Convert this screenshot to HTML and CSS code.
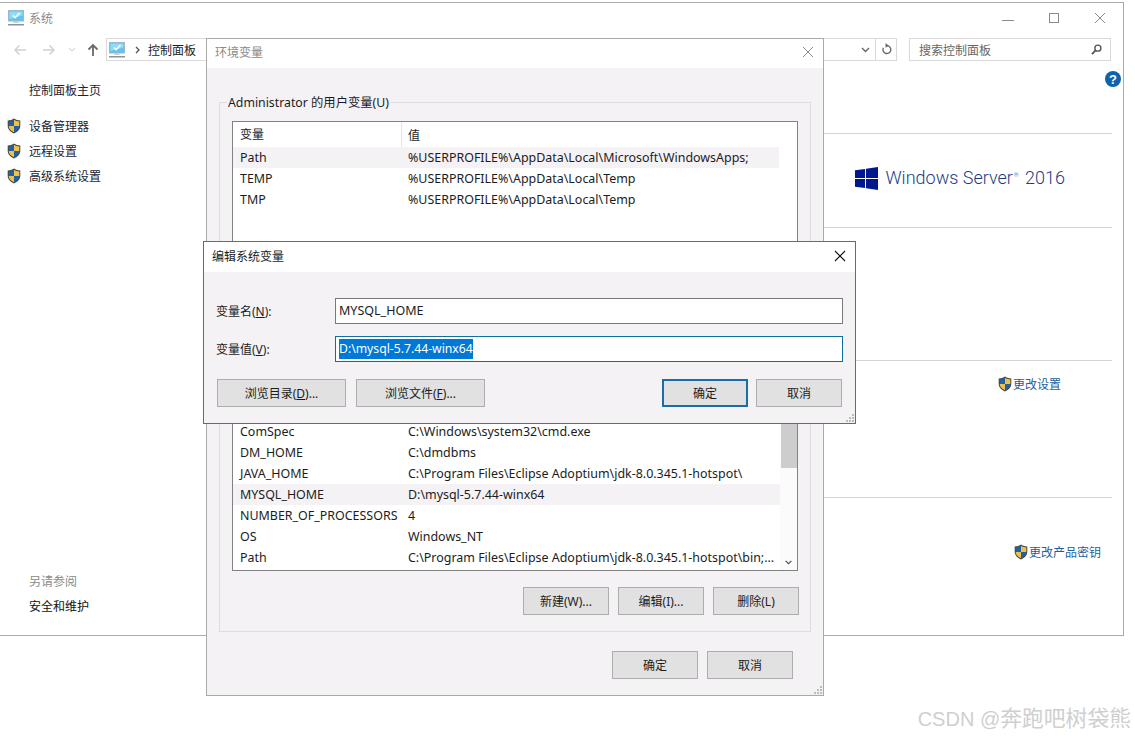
FILE: index.html
```html
<!DOCTYPE html>
<html lang="zh">
<head>
<meta charset="utf-8">
<title>系统</title>
<link rel="stylesheet" href="styles.css">
</head>
<body>
<svg class="defs" width="0" height="0" aria-hidden="true">
  <defs>
    <symbol id="shield" viewBox="0 0 14 16">
      <path d="M7 .6C5.2 1.9 3 2.5.7 2.6v5.2c0 3.4 2.5 6 6.3 7.6 3.8-1.6 6.3-4.2 6.3-7.6V2.6C11 2.5 8.800 1.900 7 .6z" fill="#4a4a3a"/>
      <path d="M7 1.700C5.500 2.700 3.600 3.300 1.700 3.400V8H7z" fill="#1f62a8"/>
      <path d="M7 1.700c1.500 1 3.400 1.600 5.300 1.700V8H7z" fill="#f0c04a"/>
      <path d="M1.700 8c.1 2.800 2.200 4.900 5.300 6.300V8z" fill="#f0c04a"/>
      <path d="M12.300 8c-.1 2.800-2.200 4.900-5.300 6.300V8z" fill="#1f62a8"/>
    </symbol>
    <symbol id="computer" viewBox="0 0 16 16">
      <rect x="0.500" y="0.500" width="15" height="10.500" fill="#5fc4f2" stroke="#9fb8c8"/>
      <path d="M1.500 1.500h13v4L1.500 9z" fill="#8edcf8"/>
      <path d="M5 5.500l2.200 2.200L11.500 3" fill="none" stroke="#fff" stroke-width="1.600"/>
      <rect x="5.500" y="11" width="5" height="2" fill="#c8ced2"/>
      <rect x="0" y="14" width="16" height="1.500" fill="#8a949c"/>
    </symbol>
    <symbol id="grip" viewBox="0 0 8 8">
      <path d="M6 0h2v2H6zM3 3h2v2H3zM6 3h2v2H6zM0 6h2v2H0zM3 6h2v2H3zM6 6h2v2H6z" fill="#bdbdbd"/>
    </symbol>
  </defs>
</svg>

<section class="main-window">
  <header class="main-title">
    <svg class="icon-16"><use href="#computer"/></svg>
    <span class="main-title-text">系统</span>
    <div class="win-controls">
      <svg class="win-btn" viewBox="0 0 12 12"><path d="M0 8.500h12" stroke="#8a8a8a"/></svg>
      <svg class="win-btn" viewBox="0 0 12 12"><rect x="1.500" y="1.500" width="9" height="9" fill="none" stroke="#8a8a8a"/></svg>
      <svg class="win-btn" viewBox="0 0 12 12"><path d="M1 1l10 10M11 1L1 11" stroke="#8a8a8a"/></svg>
    </div>
  </header>
  <nav class="main-nav">
    <svg class="nav-arrow" viewBox="0 0 14 12"><path d="M13 6H2M6.500 1.500L2 6l4.500 4.500" fill="none" stroke="#d2d2d2" stroke-width="1.500"/></svg>
    <svg class="nav-arrow" viewBox="0 0 14 12"><path d="M1 6h11M7.500 1.500L12 6l-4.500 4.500" fill="none" stroke="#d2d2d2" stroke-width="1.500"/></svg>
    <svg class="nav-drop" viewBox="0 0 8 5"><path d="M1 1l3 3 3-3" fill="none" stroke="#dcdcdc" stroke-width="1.200"/></svg>
    <svg class="nav-up" viewBox="0 0 12 14"><path d="M6 13V2M1.500 6.500L6 2l4.500 4.500" fill="none" stroke="#6a6a6a" stroke-width="1.800"/></svg>
    <div class="address">
      <svg class="icon-16 address-icon"><use href="#computer"/></svg>
      <svg class="address-chev" viewBox="0 0 5 8"><path d="M1 1l3 3-3 3" fill="none" stroke="#555" stroke-width="1.300"/></svg>
      <span class="address-text">控制面板</span>
      <svg class="address-drop" viewBox="0 0 9 6"><path d="M1 1l3.500 3.500L8 1" fill="none" stroke="#666" stroke-width="1.400"/></svg>
      <div class="address-refresh">
        <svg class="refresh-icon" viewBox="0 0 12 14"><path d="M6.500 2.800a4.300 4.300 0 1 1-3.900 2.300" fill="none" stroke="#666" stroke-width="1.500"/><path d="M5 0l3.500 2.800L5 5z" fill="#666"/></svg>
      </div>
    </div>
    <div class="search">
      <span>搜索控制面板</span>
      <svg class="search-icon" viewBox="0 0 12 12"><circle cx="7.500" cy="4.500" r="3.300" fill="none" stroke="#555" stroke-width="1.500"/><path d="M5 7l-4 4" stroke="#555" stroke-width="2"/></svg>
    </div>
  </nav>
  <div class="main-help-row">
    <svg class="help" viewBox="0 0 16 16"><circle cx="8" cy="8" r="8" fill="#0f63ae"/><text x="8" y="12.500" text-anchor="middle" class="help-q">?</text></svg>
  </div>
  <div class="main-body">
    <aside class="sidebar">
      <a class="side-home">控制面板主页</a>
      <ul class="side-links">
        <li><svg class="shield"><use href="#shield"/></svg>设备管理器</li>
        <li><svg class="shield"><use href="#shield"/></svg>远程设置</li>
        <li><svg class="shield"><use href="#shield"/></svg>高级系统设置</li>
      </ul>
      <div class="side-foot">
        <div class="side-foot-title">另请参阅</div>
        <div class="side-foot-link">安全和维护</div>
      </div>
    </aside>
    <div class="content">
      <div class="sec sec-a"></div>
      <div class="sec sec-b">
        <svg class="win-logo" viewBox="0 0 24 24"><path d="M0 3.500l10.500-1.500v9.500H0zM11.500 1.900L24 0v11.500H11.500zM0 12.500h10.500V22L0 20.500zM11.500 12.500H24V24l-12.500-1.900z" fill="#00188f"/></svg>
        <span class="win-name">Windows Server<sup class="reg">®</sup> 2016</span>
      </div>
      <div class="sec sec-c"></div>
      <div class="sec sec-d"><a class="change"><svg class="shield"><use href="#shield"/></svg>更改设置</a></div>
      <div class="sec sec-e"><a class="change"><svg class="shield"><use href="#shield"/></svg>更改产品密钥</a></div>
    </div>
  </div>
</section>

<section class="env-window">
  <header class="env-title">
    <span>环境变量</span>
    <svg class="close-12" viewBox="0 0 12 12"><path d="M1 1l10 10M11 1L1 11" stroke="#8a8a8a"/></svg>
  </header>
  <div class="env-body">
    <fieldset class="group">
      <legend>Administrator 的用户变量(U)</legend>
      <div class="list list-user">
        <div class="list-head"><span class="col-k">变量</span><span class="col-v">值</span></div>
        <div class="row row-sel"><span class="col-k">Path</span><span class="col-v">%USERPROFILE%\AppData\Local\Microsoft\WindowsApps;</span></div>
        <div class="row"><span class="col-k">TEMP</span><span class="col-v">%USERPROFILE%\AppData\Local\Temp</span></div>
        <div class="row"><span class="col-k">TMP</span><span class="col-v">%USERPROFILE%\AppData\Local\Temp</span></div>
      </div>
      <div class="list list-sys">
        <div class="sys-rows">
          <div class="row"><span class="col-k">ComSpec</span><span class="col-v">C:\Windows\system32\cmd.exe</span></div>
          <div class="row"><span class="col-k">DM_HOME</span><span class="col-v">C:\dmdbms</span></div>
          <div class="row"><span class="col-k">JAVA_HOME</span><span class="col-v">C:\Program Files\Eclipse Adoptium\jdk-8.0.345.1-hotspot\</span></div>
          <div class="row row-sel"><span class="col-k">MYSQL_HOME</span><span class="col-v">D:\mysql-5.7.44-winx64</span></div>
          <div class="row"><span class="col-k">NUMBER_OF_PROCESSORS</span><span class="col-v">4</span></div>
          <div class="row"><span class="col-k">OS</span><span class="col-v">Windows_NT</span></div>
          <div class="row"><span class="col-k">Path</span><span class="col-v">C:\Program Files\Eclipse Adoptium\jdk-8.0.345.1-hotspot\bin;...</span></div>
        </div>
        <div class="scrollbar">
          <div class="thumb"></div>
          <svg class="scroll-down" viewBox="0 0 9 6"><path d="M1 1l3.500 3.500L8 1" fill="none" stroke="#555" stroke-width="1.500"/></svg>
        </div>
      </div>
      <div class="btn-row list-btns">
        <button class="btn">新建(W)...</button>
        <button class="btn">编辑(I)...</button>
        <button class="btn">删除(L)</button>
      </div>
    </fieldset>
    <div class="btn-row env-btns">
      <button class="btn">确定</button>
      <button class="btn">取消</button>
    </div>
  </div>
  <svg class="grip"><use href="#grip"/></svg>
</section>

<section class="edit-window">
  <header class="edit-title">
    <span>编辑系统变量</span>
    <svg class="close-12" viewBox="0 0 12 12"><path d="M1 1l10 10M11 1L1 11" stroke="#111" stroke-width="1.100"/></svg>
  </header>
  <div class="edit-body">
    <div class="field">
      <label class="field-label">变量名(<u>N</u>):</label>
      <div class="input">MYSQL_HOME</div>
    </div>
    <div class="field field-second">
      <label class="field-label">变量值(<u>V</u>):</label>
      <div class="input input-focus"><span class="selected">D:\mysql-5.7.44-winx64</span></div>
    </div>
    <div class="edit-actions">
      <button class="btn btn-wide">浏览目录(<u>D</u>)...</button>
      <button class="btn btn-wide">浏览文件(<u>F</u>)...</button>
      <span class="spacer"></span>
      <button class="btn btn-default">确定</button>
      <button class="btn">取消</button>
    </div>
  </div>
  <svg class="grip"><use href="#grip"/></svg>
</section>

<div class="watermark">CSDN @<span class="watermark-cjk">奔跑吧树袋熊</span></div>
</body>
</html>
```
FILE: styles.css
```css
* { box-sizing: border-box; }
html, body { margin: 0; padding: 0; }
body {
  width: 1135px;
  height: 739px;
  overflow: hidden;
  background: #fff;
  position: relative;
  font-family: "Noto Sans", "Noto Sans CJK SC", sans-serif;
  font-size: 12px;
  color: #1c1c1c;
}
.defs { position: absolute; }
.icon-16 { width: 16px; height: 16px; flex: none; }

/* main window */
.main-window {
  position: absolute;
  left: 0;
  top: 2px;
  width: 1124px;
  height: 634px;
  border: 1px solid #ababab;
  border-left: 0;
  background: #fff;
  display: flex;
  flex-direction: column;
}
.main-title {
  height: 35px;
  display: flex;
  align-items: center;
  padding: 0 17px 6px 8px;
  flex: none;
}
.main-title-text { margin-left: 5px; color: #8a8a8a; }
.win-controls { margin-left: auto; display: flex; gap: 34px; }
.win-btn { width: 12px; height: 12px; }

.main-nav {
  height: 23px;
  flex: none;
  display: flex;
  align-items: center;
  padding-left: 13px;
}
.nav-arrow { width: 14px; height: 12px; margin-right: 15px; }
.nav-drop { width: 8px; height: 5px; margin-left: -3px; margin-right: 11px; }
.nav-up { width: 12px; height: 14px; margin-right: 7px; }
.address {
  width: 791px;
  height: 23px;
  border: 1px solid #d9d9d9;
  display: flex;
  align-items: center;
  padding-left: 2px;
}
.address-chev { width: 5px; height: 8px; margin: 0 8px 0 10px; }
.address-text { color: #1c1c1c; }
.address-drop { width: 9px; height: 6px; margin-left: auto; margin-right: 5px; }
.address-refresh {
  width: 21px;
  height: 100%;
  border-left: 1px solid #d9d9d9;
  display: flex;
  align-items: center;
  justify-content: center;
}
.refresh-icon { width: 11px; height: 13px; }
.search {
  width: 202px;
  height: 23px;
  margin-left: 12px;
  border: 1px solid #d9d9d9;
  display: flex;
  align-items: center;
  justify-content: space-between;
  padding: 0 8px 0 9px;
  color: #666;
}
.search-icon { width: 11px; height: 11px; }

.main-help-row {
  height: 0;
  flex: none;
  position: relative;
}
.help { position: absolute; right: 2px; top: 10px; width: 16px; height: 16px; }
.help-q { font-family: "Liberation Sans", sans-serif; font-size: 13px; font-weight: 700; fill: #fff; }

.main-body { flex: 1; display: flex; min-height: 0; }
.sidebar {
  width: 206px;
  flex: none;
  display: flex;
  flex-direction: column;
  padding-left: 7px;
}
.side-home { margin: 17px 0 0 22px; line-height: 25px; color: #1a2433; }
.side-links { list-style: none; margin: 10px 0 0; padding: 0; }
.side-links li { display: flex; align-items: center; height: 25px; color: #1a2433; }
.shield { width: 14px; height: 16px; flex: none; }
.side-links .shield { margin-right: 8px; }
.side-foot { margin: auto 0 16px 22px; }
.side-foot-title { line-height: 25px; color: #8a8a8a; }
.side-foot-link { line-height: 25px; color: #111; }

.content { flex: 1; display: flex; flex-direction: column; margin-right: 11px; margin-left: 0; }
.sec { border-bottom: 1px solid #d4d4d4; display: flex; flex: none; justify-content: flex-end; }
.sec-a { height: 73px; }
.sec-b { height: 94px; align-items: center; padding-right: 47px; padding-bottom: 5px; }
.sec-c { height: 133px; }
.sec-d { height: 137px; padding-right: 51px; padding-top: 14px; }
.sec-e { flex: 1; border-bottom: 0; padding-right: 11px; padding-top: 45px; }
.win-logo { width: 23px; height: 23px; margin-right: 7px; }
.win-name { font-family: Roboto, sans-serif; font-size: 18px; font-weight: 300; color: #1d3c85; white-space: nowrap; line-height: 24px; }
.reg { font-size: 6px; vertical-align: 7px; line-height: 0; margin: 0 2px 0 1px; }
.change { display: flex; align-items: center; height: 18px; color: #1c5f9c; }
.change .shield { margin-right: 1px; }

/* environment window */
.env-window {
  position: absolute;
  left: 206px;
  top: 38px;
  width: 618px;
  height: 658px;
  border: 1px solid #a9a9a9;
  background: #f5f2f6;
  display: flex;
  flex-direction: column;
}
.env-title {
  height: 29px;
  flex: none;
  background: #fff;
  display: flex;
  align-items: center;
  justify-content: space-between;
  padding: 0 9px 4px 8px;
  color: #8a8a8a;
}
.close-12 { width: 12px; height: 12px; }
.env-body { flex: 1; padding: 26px 12px 0; display: flex; flex-direction: column; }
.group {
  margin: 0;
  padding: 0 12px;
  height: 538px;
  border: 1px solid #dedcdf;
  flex: none;
  min-width: 0;
}
.group legend { margin-left: -5px; padding: 0 1px; line-height: 17px; color: #1c1c1c; font-size: 12.300px; }
.list {
  background: #fff;
  border: 1px solid #828282;
  overflow: hidden;
}
.list-user { margin-top: 10px; height: 170px; }
.list-sys {
  margin-top: 10px;
  height: 270px;
  display: flex;
  justify-content: flex-end;
}
.list-head { display: flex; height: 25px; align-items: center; margin-right: 18px; }
.list-head .col-k { border-right: 1px solid #e5e5e5; height: 100%; line-height: 25px; }
.row { display: flex; height: 21px; align-items: center; line-height: 21px; white-space: nowrap; font-size: 12.450px; }
.list-user .row { margin-right: 18px; }
.row-sel { background: #f5f2f6; }
.col-k { width: 169px; padding-left: 7px; flex: none; }
.col-v { padding-left: 6px; }
.sys-rows { flex: 1; display: flex; flex-direction: column; justify-content: flex-end; padding-bottom: 2px; min-width: 0; }
.scrollbar {
  width: 17px;
  flex: none;
  display: flex;
  flex-direction: column;
  justify-content: flex-end;
  align-items: center;
  padding-bottom: 5px;
  background: #fbfbfb;
}
.thumb { width: 16px; height: 200px; background: #cdcdcd; margin-bottom: 92px; }
.scroll-down { width: 9px; height: 6px; }
.btn-row { display: flex; justify-content: flex-end; }
.list-btns { gap: 9px; margin-top: 16px; margin-right: -1px; }
.env-btns { gap: 9px; margin-top: 19px; padding-right: 18px; }
.btn {
  width: 86px;
  height: 28px;
  margin: 0;
  padding: 0;
  background: #e1e1e1;
  border: 1px solid #adadad;
  font: inherit;
  color: #1c1c1c;
}
.grip { position: absolute; right: 1px; bottom: 1px; width: 8px; height: 8px; }

/* edit window */
.edit-window {
  position: absolute;
  left: 203px;
  top: 241px;
  width: 653px;
  height: 183px;
  border: 1px solid #2d7f9e;
  background: #f5f2f6;
  display: flex;
  flex-direction: column;
}
.edit-title {
  height: 30px;
  flex: none;
  background: #fff;
  display: flex;
  align-items: center;
  justify-content: space-between;
  padding: 0 9px 2px 8px;
}
.edit-body { flex: 1; padding: 26px 12px 0 12px; }
.field { display: flex; align-items: center; }
.field-second { margin-top: 12px; }
.field-label { width: 119px; flex: none; }
.input {
  flex: 1;
  height: 26px;
  background: #fff;
  border: 1px solid #7a7a7a;
  padding-left: 3px;
  line-height: 24px;
  font-size: 12.500px;
}
.input-focus { border-color: #0f6fa0; }
.selected { display: inline-block; height: 20px; line-height: 20px; background: #0078d7; color: #fff; vertical-align: top; margin-top: 2px; font-size: 12.200px; }
.edit-actions { display: flex; align-items: center; gap: 9px; margin-top: 17px; padding: 0 1px; }
.spacer { flex: 1; }
.btn-wide { width: 129px; margin-right: 1px; }
.btn-default { border: 2px solid #1a6ea8; margin-right: -1px; }

.watermark {
  position: absolute;
  right: 4px;
  top: 703px;
  font-family: "Liberation Sans", sans-serif;
  font-size: 20px;
  line-height: 28px;
  color: #cfcfcf;
  white-space: nowrap;
}
.watermark-cjk { font-family: "Noto Sans CJK SC", sans-serif; font-size: 21.800px; }
```
